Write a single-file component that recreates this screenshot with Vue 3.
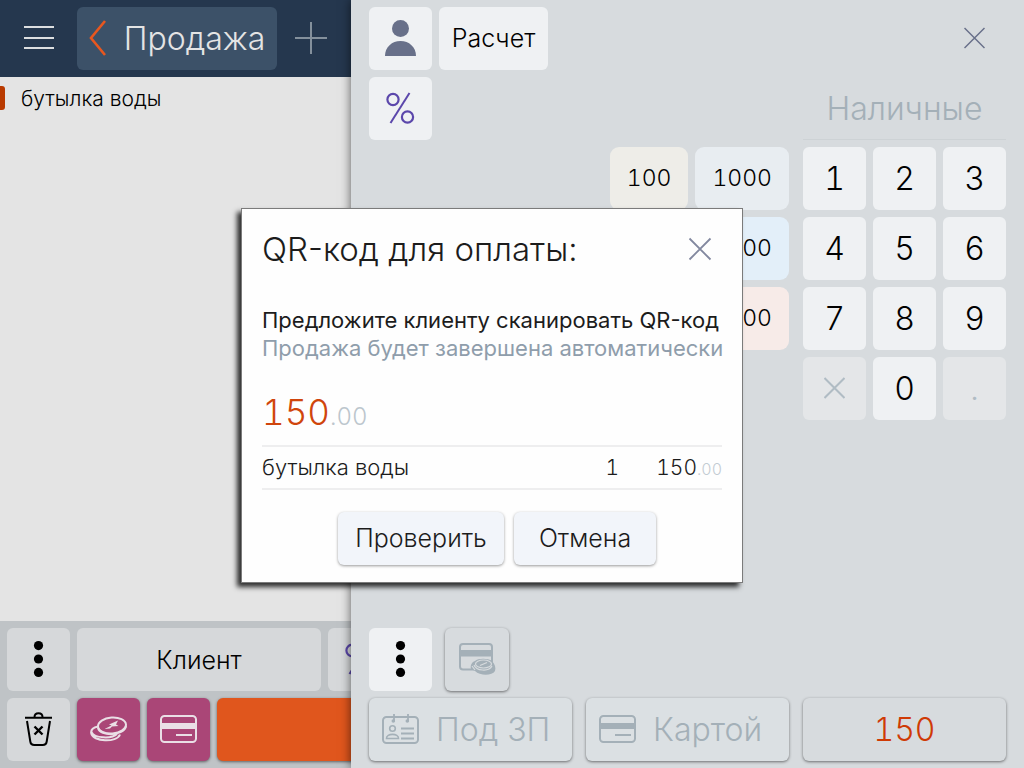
<script setup>
const keys = ['1', '2', '3', '4', '5', '6', '7', '8', '9']
const noteRows = [
  [{ value: '100', tone: 'sand' }, { value: '1000', tone: 'mist' }],
  [{ value: '200', tone: 'sand' }, { value: '2000', tone: 'sky' }],
  [{ value: '500', tone: 'sand' }, { value: '5000', tone: 'rose' }],
]
const items = [{ name: 'бутылка воды', count: 1, whole: '150', cents: '.00' }]
</script>

<template>
  <div class="app">
    <section class="sale">
      <header class="sale-head">
        <button class="plain square" aria-label="Меню">
          <svg width="31" height="26" viewBox="0 0 31 26"><path d="M1 2H31M1 13H31M1 23H31" stroke="#dcdee0" stroke-width="2" fill="none" /></svg>
        </button>
        <button class="back">
          <svg width="18" height="38" viewBox="0 0 18 38"><path d="M16 2L2 19L16 36" stroke="#e8571f" stroke-width="2.6" fill="none" /></svg>
          <span>Продажа</span>
        </button>
        <button class="plain add" aria-label="Добавить">
          <svg width="32" height="32" viewBox="0 0 32 32"><path d="M0 16H32M16 0V32" stroke="#84909c" stroke-width="2" fill="none" /></svg>
        </button>
      </header>
      <ul class="sale-list">
        <li v-for="item in items" :key="item.name">{{ item.name }}</li>
      </ul>
      <footer class="sale-foot">
        <div class="bar">
          <button class="tile square dim" aria-label="Ещё">
            <svg width="11" height="36" viewBox="0 0 11 36"><circle cx="5.500" cy="4.6" r="4.6" /><circle cx="5.500" cy="18" r="4.6" /><circle cx="5.500" cy="31.4" r="4.6" /></svg>
          </button>
          <button class="tile dim client">Клиент</button>
          <button class="tile square dim" aria-label="Скидка">
            <svg width="29" height="32" viewBox="0 0 29 32"><g fill="none" stroke="#5b47ab"><circle cx="7" cy="7.5" r="5.6" stroke-width="2.2" /><circle cx="21.5" cy="25" r="5.6" stroke-width="2.2" /><path d="M23.500 1L4.500 31" stroke-width="2" /></g></svg>
          </button>
        </div>
        <div class="bar">
          <button class="tile square dim" aria-label="Удалить">
            <svg width="27" height="34" viewBox="0 0 27 34"><g fill="none" stroke="#000" stroke-width="2"><path d="M0 5.7H27M9.500 5C9.500 0 17.500 0 17.500 5M2 9L5.300 29.5Q5.800 33 9.300 33H17.700Q21.200 33 21.700 29.5L25 9" /><path d="M9.500 14.5L17.500 22.500M17.500 14.5L9.500 22.500" stroke-width="2.4" /></g></svg>
          </button>
          <button class="tile square plum raised" aria-label="Наличные">
            <svg width="37" height="26" viewBox="0 0 37 26"><g fill="none" stroke="#eadfe6" stroke-width="2"><ellipse cx="22" cy="9.500" rx="14" ry="8" transform="rotate(-4 22 9.500)" /><path d="M8 12C10 20.500 34 20.500 36 10M8 10.500C3 11.500 0.800 14 1.200 17C2.500 26 27 27 30 18.500M1.500 16C4 22.500 22 23 27 18" /></g><path d="M14.500 13L21.500 9.500L19 8.500L28 4.500L26 8.500L28.500 10L22 10.500L20 12.500Z" fill="#eadfe6" /></svg>
          </button>
          <button class="tile square plum raised" aria-label="Карта">
            <svg width="37" height="28" viewBox="0 0 37 28"><g fill="none" stroke="#eadfe6" stroke-width="2"><rect x="1" y="1" width="35" height="26" rx="3.500" /><path d="M16 20H32" /></g><rect x="1" y="8" width="35" height="6" fill="#eadfe6" /></svg>
          </button>
          <button class="tile pay raised" aria-label="Оплатить"></button>
        </div>
      </footer>
    </section>

    <main class="checkout">
      <div class="top">
        <div class="tools">
          <div class="bar">
            <button class="tile square" aria-label="Покупатель">
              <svg width="31" height="36" viewBox="0 0 31 36"><circle cx="15.500" cy="8.500" r="8.500" fill="#687089" /><path d="M0 36C0 27 7 21 15.500 21S31 27 31 36Z" fill="#687089" /></svg>
            </button>
            <button class="tile calc">Расчет</button>
          </div>
          <button class="tile square" aria-label="Скидка">
            <svg width="29" height="32" viewBox="0 0 29 32"><g fill="none" stroke="#5b47ab"><circle cx="7" cy="7.500" r="5.600" stroke-width="2.200" /><circle cx="21.500" cy="25" r="5.600" stroke-width="2.200" /><path d="M23.500 1L4.500 31" stroke-width="2" /></g></svg>
          </button>
        </div>
        <button class="plain square" aria-label="Закрыть">
          <svg width="21" height="22" viewBox="0 0 21 22"><path d="M0.500 1L20.500 21M20.500 1L0.500 21" stroke="#687089" stroke-width="1.500" fill="none" /></svg>
        </button>
      </div>

      <div class="cash">
        <div class="notes">
          <div v-for="(row, i) in noteRows" :key="i" class="bar">
            <button v-for="note in row" :key="note.value" class="tile note digits" :class="note.tone">{{ note.value }}</button>
          </div>
        </div>
        <div class="pad">
          <label class="amount"><input type="text" placeholder="Наличные" aria-label="Наличные" /></label>
          <div class="keys">
            <button v-for="k in keys" :key="k" class="tile key digits">{{ k }}</button>
            <button class="tile key off" aria-label="Стереть">
              <svg width="21" height="22" viewBox="0 0 21 22"><path d="M0.500 1L20.500 21M20.500 1L0.500 21" stroke="#b0bcc4" stroke-width="2" fill="none" /></svg>
            </button>
            <button class="tile key digits">0</button>
            <button class="tile key off">.</button>
          </div>
        </div>
      </div>

      <div class="bottom">
        <div class="bar mixed">
          <button class="tile square" aria-label="Ещё">
            <svg width="11" height="36" viewBox="0 0 11 36"><circle cx="5.500" cy="4.600" r="4.600" /><circle cx="5.500" cy="18" r="4.600" /><circle cx="5.500" cy="31.400" r="4.600" /></svg>
          </button>
          <button class="tile combo raised" aria-label="Смешанная оплата">
            <svg width="38" height="34" viewBox="0 0 38 34"><rect x="2" y="2" width="32" height="25.500" rx="3" fill="none" stroke="#a4b0b8" stroke-width="2" /><rect x="2" y="8" width="32" height="6.500" fill="#a4b0b8" /><path d="M13 27C12 23 14 20 17 19C20 16 30 16 34 19C37 22 38 26 37 29C34 34 22 34 17 29Z" fill="#a4b0b8" /><g fill="none" stroke="#d7dbde" stroke-width="1.200"><ellipse cx="25.500" cy="22" rx="8" ry="4" /><path d="M16 23C18 29 31 30 34 24M22 23.500L29 20.500" /><path d="M14 24L17 28" /></g></svg>
          </button>
        </div>
        <div class="pays">
          <button class="tile way raised">
            <svg width="38" height="30" viewBox="0 0 38 30"><g fill="none" stroke="#a4b0b8" stroke-width="2"><rect x="1" y="3" width="35" height="26" rx="3.500" /><path d="M19 14.500H32M19 19.500H32M19 24.500H32M12 0V7.500M26 0V7.500" stroke-width="1.800" /><circle cx="10.500" cy="14.500" r="2.800" stroke-width="1.600" /><path d="M4.500 24.500C4 19 17 19 16.500 24.500Z" stroke-width="1.600" /></g><circle cx="11.300" cy="7" r="1.800" fill="#a4b0b8" /><circle cx="25.300" cy="7" r="1.800" fill="#a4b0b8" /></svg>
            <span>Под ЗП</span>
          </button>
          <button class="tile way raised">
            <svg width="38" height="28" viewBox="0 0 38 28"><g fill="none" stroke="#a4b0b8" stroke-width="2"><rect x="1" y="1" width="35" height="26" rx="3.500" /><path d="M16 20H32" /></g><rect x="1" y="8" width="35" height="6" fill="#a4b0b8" /></svg>
            <span>Картой</span>
          </button>
          <button class="tile total raised digits">150</button>
        </div>
      </div>
    </main>

    <div class="overlay">
      <div class="dialog" role="dialog" aria-labelledby="qr-title">
        <header class="dialog-head">
          <h1 id="qr-title">QR-код для оплаты:</h1>
          <button class="plain dialog-close" aria-label="Закрыть">
            <svg width="24" height="24" viewBox="0 0 24 24"><path d="M1.500 1.500L22.500 22.500M22.500 1.500L1.500 22.500" stroke="#82889f" stroke-width="1.800" fill="none" /></svg>
          </button>
        </header>
        <p class="hint">Предложите клиенту сканировать QR-код</p>
        <p class="hint soft">Продажа будет завершена автоматически</p>
        <p class="sum digits">150<small>.00</small></p>
        <table>
          <tbody>
            <tr v-for="item in items" :key="item.name">
              <td>{{ item.name }}</td>
              <td class="num digits">{{ item.count }}</td>
              <td class="num digits price">{{ item.whole }}<small>{{ item.cents }}</small></td>
            </tr>
          </tbody>
        </table>
        <div class="actions">
          <button class="action">Проверить</button>
          <button class="action wide">Отмена</button>
        </div>
      </div>
    </div>
  </div>
</template>

<style>
html, body, #app { height: 100%; }
body { margin: 0; }
</style>

<style scoped>
.app {
  position: relative;
  display: grid;
  grid-template-columns: 351px 1fr;
  min-height: 100%;
  overflow: hidden;
  font-family: Inter, "Noto Sans", sans-serif;
  font-weight: 300;
  color: #000;
}
.app * { box-sizing: border-box; }
button {
  display: flex;
  align-items: center;
  justify-content: center;
  border: 0;
  margin: 0;
  padding: 0 0 1px;
  font: inherit;
  color: inherit;
  flex: none;
}
svg { display: block; flex: none; }
.plain { background: none; }
.tile { height: 63px; border-radius: 6px; background: #eff1f3; font-size: 25px; }
.digits { font-feature-settings: "tnum"; }
.square { width: 63px; height: 63px; }
.bar { display: flex; gap: 7px; }
.raised { box-shadow: 0 1px 3px rgba(0, 0, 0, 0.5); }

.sale { display: flex; flex-direction: column; background: #e4e4e4; overflow: hidden; min-width: 0; }
.sale-head { display: flex; gap: 7px; padding: 7px; background: #25374e; }
.back { width: 200px; height: 63px; gap: 17px; border-radius: 6px; background: #3c5168; color: #e4e4e4; font-size: 32px; }
.add { width: 54px; }
.sale-list { flex: 1; list-style: none; margin: 0; padding: 9px 0; }
.sale-list li { display: flex; align-items: center; gap: 16px; height: 24px; font-size: 21px; }
.sale-list li::before { content: ""; width: 5px; height: 24px; border-radius: 0 3px 3px 0; background: #b93a00; }
.sale-foot { display: grid; gap: 7px; padding: 7px; background: #bfc3c6; }
.dim { background: #d6d8da; }
.client { width: 244px; padding: 0; }
.plum { background: #aa4677; }
.pay { width: 400px; background: #e0561d; }

.checkout {
  position: relative;
  display: flex;
  flex-direction: column;
  padding: 7px 18px;
  background: #d7dbde;
  box-shadow: 0 0 10px rgba(0, 0, 0, 0.6);
}
.top { display: flex; justify-content: space-between; height: 70px; }
.tools { display: flex; flex-direction: column; gap: 7px; }
.calc { width: 109px; }
.cash { display: flex; justify-content: flex-end; gap: 14px; }
.notes { display: flex; flex-direction: column; gap: 7px; padding-top: 70px; }
.notes .bar { justify-content: flex-end; }
.note { padding: 0 17px 1px; border-radius: 9px; font-size: 23px; }
.sand { background: #eeede8; }
.mist { background: #e8edf1; }
.sky { background: #e3eff9; }
.rose { background: #f7ebe8; }
.pad { width: 203px; }
.amount { display: block; height: 63px; margin-bottom: 7px; border-bottom: 1px solid #cdd2d5; }
.amount input {
  width: 100%;
  height: 62px;
  border: 0;
  padding: 0;
  background: none;
  font: inherit;
  font-size: 32px;
  text-align: center;
  outline: 0;
}
.amount input::placeholder { color: #a4b0b8; opacity: 1; }
.keys { display: grid; grid-template-columns: repeat(3, 1fr); gap: 7px; }
.key { font-size: 32px; }
.off { background: #e4e6e8; color: #b0bcc4; }
.bottom { margin-top: auto; display: grid; gap: 7px; }
.mixed { gap: 13px; }
.combo { width: 64px; background: #d7dbde; }
.pays { display: grid; grid-template-columns: repeat(3, 1fr); gap: 14px; }
.way { justify-content: flex-start; gap: 16px; padding-left: 13px; background: #dbe0e3; color: #a4b0b8; font-size: 32px; }
.total { background: #d7dbde; color: #cf3a05; font-size: 32px; }

.overlay { position: absolute; inset: 0; display: flex; align-items: center; justify-content: center; padding-top: 22px; padding-right: 40px; }
.dialog {
  width: 502px;
  border: 1px solid #7b7b7b;
  padding: 20px 20px 17px;
  background: #fefefe;
  box-shadow: -4px 4px 5px rgba(0, 0, 0, 0.8);
  color: #1c1c1c;
}
.dialog-head { display: flex; align-items: center; justify-content: space-between; height: 40px; }
h1 { margin: 0; font-size: 33px; font-weight: 300; }
.dialog-close { width: 44px; height: 40px; padding: 1px 0 0; }
p { margin: 0; }
.hint { font-size: 22px; font-weight: 400; line-height: 28px; white-space: nowrap; }
.dialog-head + .hint { margin-top: 37px; }
.soft { color: #8f9dab; }
.sum { margin-top: 28px; font-size: 35px; line-height: 44px; color: #d0450c; }
.sum small { font-size: 24px; color: #bcc6cd; }
table { width: 100%; margin-top: 6px; border-collapse: collapse; border-top: 2px solid #eeeeef; border-bottom: 2px solid #eeeeef; }
td { height: 43px; padding: 0; font-size: 22px; }
.num { text-align: right; font-size: 21px; }
.price { width: 103px; }
.price small { font-size: 16px; color: #c3ccd3; }
.actions { display: flex; justify-content: center; gap: 10px; margin-top: 22px; padding-left: 10px; }
.action { width: 166px; height: 53px; padding: 0; border-radius: 6px; background: #f2f5fa; box-shadow: 0 1px 3px rgba(0, 0, 0, 0.4); font-size: 25px; }
.wide { width: 142px; }
</style>
